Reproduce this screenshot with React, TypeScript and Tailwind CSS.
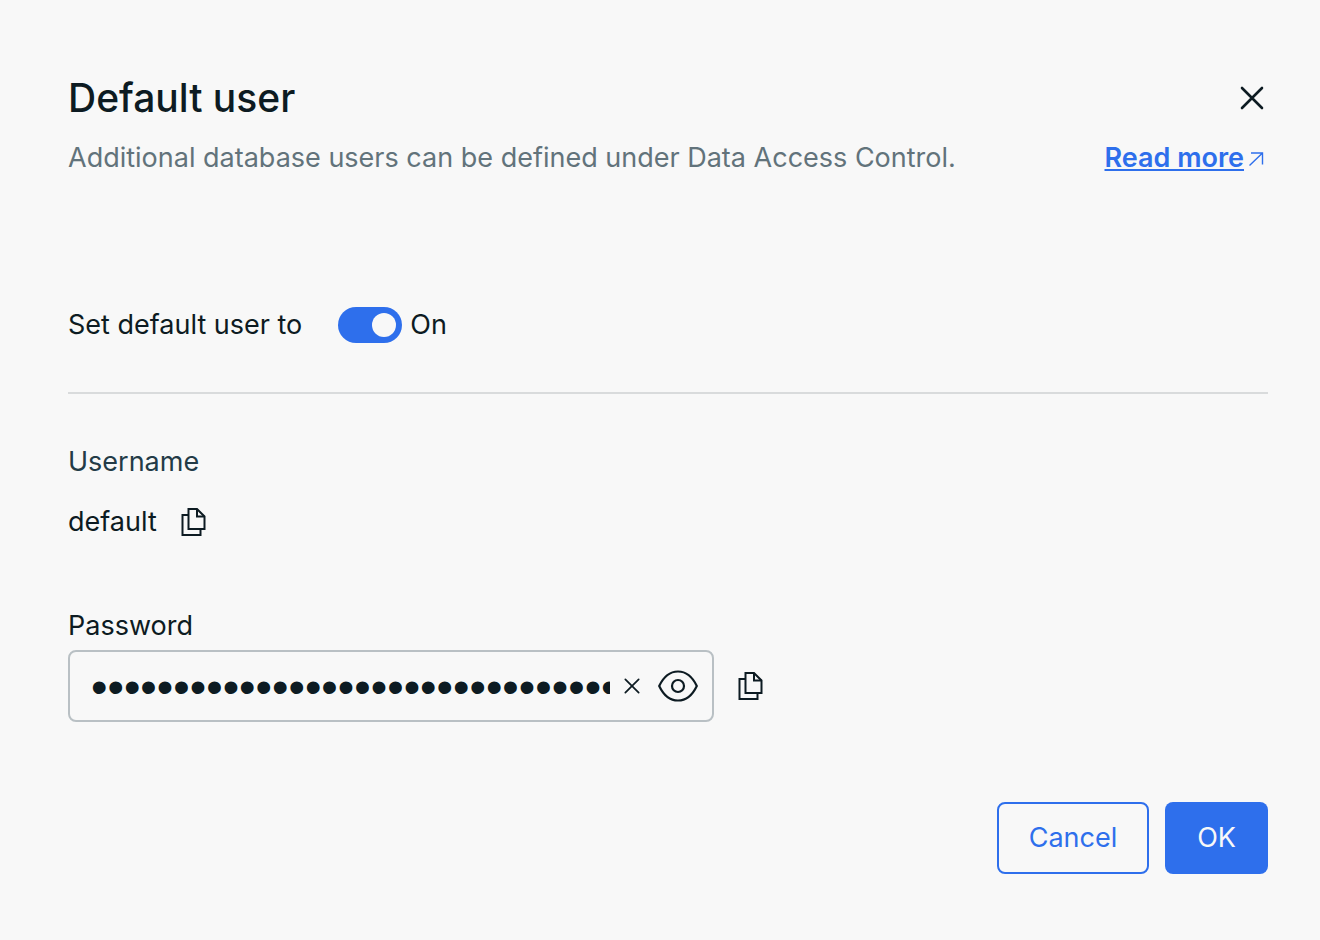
import { useState } from 'react'

const PASSWORD = 'k3vQ9xLr2TzW7mHnB5cYd8PfJ4sGa6Ue1RoXiKtM'

function CloseIcon({ className, strokeWidth }: { className?: string; strokeWidth: number }) {
  return (
    <svg viewBox="0 0 24 24" fill="none" stroke="currentColor" strokeWidth={strokeWidth} strokeLinecap="round" className={className} aria-hidden="true">
      <path d="M2 2l20 20M22 2L2 22" />
    </svg>
  )
}

function CopyIcon() {
  return (
    <svg width="26" height="30" viewBox="0 0 26 30" fill="none" stroke="currentColor" strokeWidth="2" aria-hidden="true">
      <path d="M7.500 2H16l7.500 7.500V22h-16z" />
      <path d="M16 2v7.500h7.500" />
      <path d="M7.500 8h-6v20h18v-6" />
    </svg>
  )
}

function EyeIcon() {
  return (
    <svg width="40" height="32" viewBox="0 0 40 32" fill="none" stroke="currentColor" strokeWidth="2.2" strokeLinejoin="round" aria-hidden="true">
      <path d="M1.200 16C5 8 11.500 1.500 20 1.500S35 8 38.800 16C35 24 28.500 30.500 20 30.500S5 24 1.200 16z" />
      <circle cx="20" cy="16" r="6" />
    </svg>
  )
}

function ArrowIcon() {
  return (
    <svg width="16" height="16" viewBox="0 0 16 16" fill="none" stroke="currentColor" strokeWidth="1.4" aria-hidden="true">
      <path d="M1.500 15.500L14.500 3M3 3h11.500v11.500" />
    </svg>
  )
}

export default function App() {
  const [enabled, setEnabled] = useState(true)
  const [password, setPassword] = useState(PASSWORD)
  const [visible, setVisible] = useState(false)

  const copy = (value: string) => navigator.clipboard?.writeText(value)

  return (
    <main className="min-h-screen bg-[#f8f8f8] pt-[74px] pr-[52px] pb-16 pl-[68px] font-['Inter',sans-serif] text-[27px] leading-10 text-[#0d1b22]">
      {/* Header */}
      <header>
        <div className="flex items-center justify-between">
          <h1 className="text-[39px] leading-12 font-medium">Default user</h1>
          <button type="button" aria-label="Close" className="p-1">
            <CloseIcon className="size-6" strokeWidth={2.6} />
          </button>
        </div>
        <div className="mt-4 flex items-center justify-between">
          <p className="text-[#62737b]">Additional database users can be defined under Data Access Control.</p>
          <a href="#read-more" className="flex items-center gap-1 pr-1 font-semibold text-[#2e6fec]">
            <span className="underline decoration-2 underline-offset-2">Read more</span>
            <ArrowIcon />
          </a>
        </div>
      </header>

      {/* Toggle */}
      <div className="mt-[127px] flex items-center border-b-2 border-[#d9dbdc] pb-[47px]">
        <label htmlFor="default-user" className="mr-9">Set default user to</label>
        <input
          id="default-user"
          type="checkbox"
          role="switch"
          checked={enabled}
          onChange={(e) => setEnabled(e.target.checked)}
          className="mr-2 flex h-9 w-16 appearance-none items-center rounded-full bg-gray-400 px-1.5 before:size-6 before:rounded-full before:bg-[#f8f8f8] checked:justify-end checked:bg-[#2e6fec]"
        />
        <span>{enabled ? 'On' : 'Off'}</span>
      </div>

      {/* Credentials */}
      <section className="mt-12">
        <h2 className="text-[#233b47]">Username</h2>
        <div className="mt-5 flex items-center gap-6">
          <span>default</span>
          <button type="button" aria-label="Copy username" onClick={() => copy('default')}>
            <CopyIcon />
          </button>
        </div>
      </section>

      <section className="mt-16">
        <label htmlFor="password" className="block">Password</label>
        <div className="mt-1 flex items-center gap-6">
          <div className="flex h-18 w-[646px] items-center rounded-lg border-2 border-[#b9c0c4] pr-3.5 pl-[21px]">
            <input
              id="password"
              type={visible ? 'text' : 'password'}
              value={password}
              onChange={(e) => setPassword(e.target.value)}
              className={
                visible
                  ? 'min-w-0 flex-1 bg-transparent outline-none'
                  : "h-10 min-w-0 flex-1 bg-transparent font-['Liberation_Sans',sans-serif] text-[47px] outline-none"
              }
            />
            <button type="button" aria-label="Clear password" className="ml-3.5" onClick={() => setPassword('')}>
              <CloseIcon className="size-4" strokeWidth={2.6} />
            </button>
            <button type="button" aria-label="Show password" className="ml-[18px]" onClick={() => setVisible(!visible)}>
              <EyeIcon />
            </button>
          </div>
          <button type="button" aria-label="Copy password" onClick={() => copy(password)}>
            <CopyIcon />
          </button>
        </div>
      </section>

      {/* Actions */}
      <footer className="mt-20 flex justify-end gap-4">
        <button type="button" className="h-18 rounded-lg border-2 border-[#2e6fec] px-[30px] text-[#2e6fec]">
          Cancel
        </button>
        <button type="button" className="h-18 rounded-lg bg-[#2e6fec] px-8 text-[#f8f8f8]">
          OK
        </button>
      </footer>
    </main>
  )
}
